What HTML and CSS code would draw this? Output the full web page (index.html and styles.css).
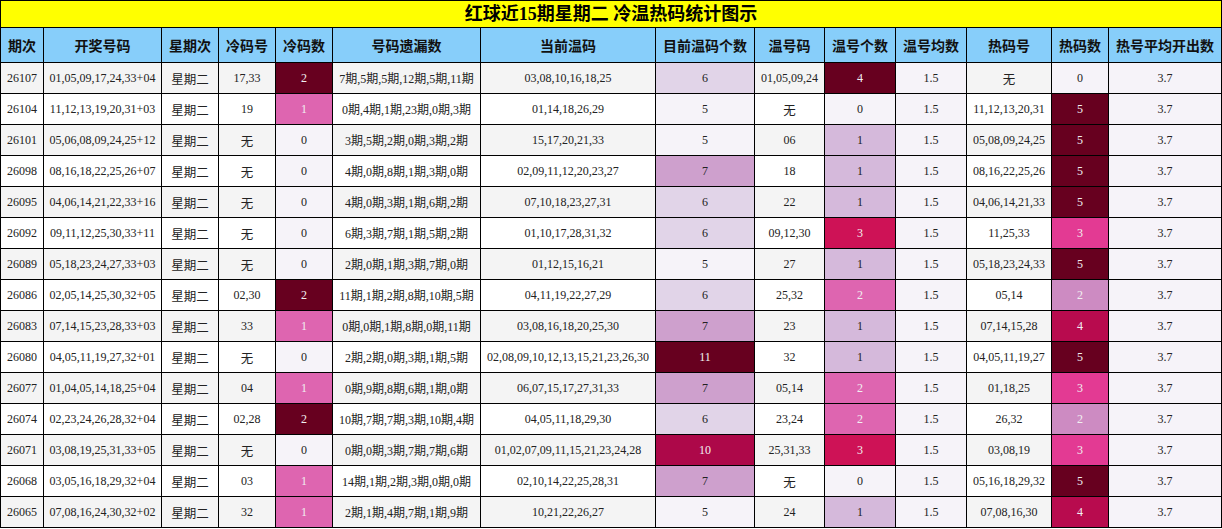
FILE: index.html
```html
<!DOCTYPE html>
<html lang="zh">
<head>
<meta charset="utf-8">
<title>红球近15期星期二 冷温热码统计图示</title>
<link rel="stylesheet" href="styles.css">
</head>
<body>
<table class="stats">
<colgroup>
<col class="w43"><col class="w118"><col class="w57"><col class="w57"><col class="w57"><col class="w148"><col class="w175"><col class="w99"><col class="w70"><col class="w71"><col class="w71"><col class="w85"><col class="w57"><col class="w113">
</colgroup>
<thead>
<tr class="title-row"><th colspan="14">红球近15期星期二 冷温热码统计图示</th></tr>
<tr class="head-row">
<th>期次</th><th>开奖号码</th><th>星期次</th><th>冷码号</th><th>冷码数</th><th>号码遗漏数</th><th>当前温码</th><th>目前温码个数</th><th>温号码</th><th>温号个数</th><th>温号均数</th><th>热码号</th><th>热码数</th><th>热号平均开出数</th>
</tr>
</thead>
<tbody>
<tr><td>26107</td><td>01,05,09,17,24,33+04</td><td class="cjk">星期二</td><td>17,33</td><td class="q100 lt">2</td><td>7期,5期,5期,12期,5期,11期</td><td>03,08,10,16,18,25</td><td class="q17">6</td><td>01,05,09,24</td><td class="q100 lt">4</td><td class="q0">1.5</td><td class="cjk">无</td><td class="q0">0</td><td class="q0">3.7</td></tr>
<tr><td>26104</td><td>11,12,13,19,20,31+03</td><td class="cjk">星期二</td><td>19</td><td class="q50 lt">1</td><td>0期,4期,1期,23期,0期,3期</td><td>01,14,18,26,29</td><td class="q0">5</td><td class="cjk">无</td><td class="q0">0</td><td class="q0">1.5</td><td>11,12,13,20,31</td><td class="q100 lt">5</td><td class="q0">3.7</td></tr>
<tr><td>26101</td><td>05,06,08,09,24,25+12</td><td class="cjk">星期二</td><td class="cjk">无</td><td class="q0">0</td><td>3期,5期,2期,0期,3期,2期</td><td>15,17,20,21,33</td><td class="q0">5</td><td>06</td><td class="q25">1</td><td class="q0">1.5</td><td>05,08,09,24,25</td><td class="q100 lt">5</td><td class="q0">3.7</td></tr>
<tr><td>26098</td><td>08,16,18,22,25,26+07</td><td class="cjk">星期二</td><td class="cjk">无</td><td class="q0">0</td><td>4期,0期,8期,1期,3期,0期</td><td>02,09,11,12,20,23,27</td><td class="q33">7</td><td>18</td><td class="q25">1</td><td class="q0">1.5</td><td>08,16,22,25,26</td><td class="q100 lt">5</td><td class="q0">3.7</td></tr>
<tr><td>26095</td><td>04,06,14,21,22,33+16</td><td class="cjk">星期二</td><td class="cjk">无</td><td class="q0">0</td><td>4期,0期,3期,1期,6期,2期</td><td>07,10,18,23,27,31</td><td class="q17">6</td><td>22</td><td class="q25">1</td><td class="q0">1.5</td><td>04,06,14,21,33</td><td class="q100 lt">5</td><td class="q0">3.7</td></tr>
<tr><td>26092</td><td>09,11,12,25,30,33+11</td><td class="cjk">星期二</td><td class="cjk">无</td><td class="q0">0</td><td>6期,3期,7期,1期,5期,2期</td><td>01,10,17,28,31,32</td><td class="q17">6</td><td>09,12,30</td><td class="q75 lt">3</td><td class="q0">1.5</td><td>11,25,33</td><td class="q60 lt">3</td><td class="q0">3.7</td></tr>
<tr><td>26089</td><td>05,18,23,24,27,33+03</td><td class="cjk">星期二</td><td class="cjk">无</td><td class="q0">0</td><td>2期,0期,1期,3期,7期,0期</td><td>01,12,15,16,21</td><td class="q0">5</td><td>27</td><td class="q25">1</td><td class="q0">1.5</td><td>05,18,23,24,33</td><td class="q100 lt">5</td><td class="q0">3.7</td></tr>
<tr><td>26086</td><td>02,05,14,25,30,32+05</td><td class="cjk">星期二</td><td>02,30</td><td class="q100 lt">2</td><td>11期,1期,2期,8期,10期,5期</td><td>04,11,19,22,27,29</td><td class="q17">6</td><td>25,32</td><td class="q50 lt">2</td><td class="q0">1.5</td><td>05,14</td><td class="q40 lt">2</td><td class="q0">3.7</td></tr>
<tr><td>26083</td><td>07,14,15,23,28,33+03</td><td class="cjk">星期二</td><td>33</td><td class="q50 lt">1</td><td>0期,0期,1期,8期,0期,11期</td><td>03,08,16,18,20,25,30</td><td class="q33">7</td><td>23</td><td class="q25">1</td><td class="q0">1.5</td><td>07,14,15,28</td><td class="q80 lt">4</td><td class="q0">3.7</td></tr>
<tr><td>26080</td><td>04,05,11,19,27,32+01</td><td class="cjk">星期二</td><td class="cjk">无</td><td class="q0">0</td><td>2期,2期,0期,3期,1期,5期</td><td>02,08,09,10,12,13,15,21,23,26,30</td><td class="q100 lt">11</td><td>32</td><td class="q25">1</td><td class="q0">1.5</td><td>04,05,11,19,27</td><td class="q100 lt">5</td><td class="q0">3.7</td></tr>
<tr><td>26077</td><td>01,04,05,14,18,25+04</td><td class="cjk">星期二</td><td>04</td><td class="q50 lt">1</td><td>0期,9期,8期,6期,1期,0期</td><td>06,07,15,17,27,31,33</td><td class="q33">7</td><td>05,14</td><td class="q50 lt">2</td><td class="q0">1.5</td><td>01,18,25</td><td class="q60 lt">3</td><td class="q0">3.7</td></tr>
<tr><td>26074</td><td>02,23,24,26,28,32+04</td><td class="cjk">星期二</td><td>02,28</td><td class="q100 lt">2</td><td>10期,7期,7期,3期,10期,4期</td><td>04,05,11,18,29,30</td><td class="q17">6</td><td>23,24</td><td class="q50 lt">2</td><td class="q0">1.5</td><td>26,32</td><td class="q40 lt">2</td><td class="q0">3.7</td></tr>
<tr><td>26071</td><td>03,08,19,25,31,33+05</td><td class="cjk">星期二</td><td class="cjk">无</td><td class="q0">0</td><td>0期,0期,3期,7期,7期,6期</td><td>01,02,07,09,11,15,21,23,24,28</td><td class="q83 lt">10</td><td>25,31,33</td><td class="q75 lt">3</td><td class="q0">1.5</td><td>03,08,19</td><td class="q60 lt">3</td><td class="q0">3.7</td></tr>
<tr><td>26068</td><td>03,05,16,18,29,32+04</td><td class="cjk">星期二</td><td>03</td><td class="q50 lt">1</td><td>14期,1期,2期,3期,0期,0期</td><td>02,10,14,22,25,28,31</td><td class="q33">7</td><td class="cjk">无</td><td class="q0">0</td><td class="q0">1.5</td><td>05,16,18,29,32</td><td class="q100 lt">5</td><td class="q0">3.7</td></tr>
<tr><td>26065</td><td>07,08,16,24,30,32+02</td><td class="cjk">星期二</td><td>32</td><td class="q50 lt">1</td><td>2期,1期,4期,7期,1期,9期</td><td>10,21,22,26,27</td><td class="q0">5</td><td>24</td><td class="q25">1</td><td class="q0">1.5</td><td>07,08,16,30</td><td class="q80 lt">4</td><td class="q0">3.7</td></tr>
</tbody>
</table>
</body>
</html>
```
FILE: styles.css
```css
html, body {
  margin: 0;
  padding: 0;
  background: #ffffff;
}

.stats {
  border-collapse: collapse;
  table-layout: fixed;
  width: 1222px;
  font-family: "Liberation Serif", "Noto Sans CJK SC", serif;
  font-size: 12px;
  color: #222222;
}

.w43 { width: 43px; }
.w57 { width: 57px; }
.w70 { width: 70px; }
.w71 { width: 71px; }
.w85 { width: 85px; }
.w99 { width: 99px; }
.w113 { width: 113px; }
.w118 { width: 118px; }
.w148 { width: 148px; }
.w175 { width: 175px; }

.stats th,
.stats td {
  border: 1px solid #000000;
  padding: 0;
  text-align: center;
  vertical-align: middle;
  white-space: nowrap;
  overflow: hidden;
}

.title-row th {
  height: 26px;
  background: #ffff00;
  color: #000000;
  font-size: 18px;
  font-weight: bold;
  line-height: 26px;
}

.head-row th {
  height: 34px;
  background: #87cefa;
  color: #111111;
  font-size: 14px;
  font-weight: bold;
  font-family: "Noto Sans CJK SC", sans-serif;
}

.stats tbody tr {
  height: 31px;
}

.stats tbody td {
  height: 30px;
}

.stats tbody tr:nth-child(odd) td {
  background: #f4f4f4;
}

.stats tbody tr:nth-child(even) td {
  background: #ffffff;
}

.stats td.cjk {
  font-size: 12.5px;
}

/* PuRd colour scale (placed after the row striping so it wins) */
.stats tbody tr td.q0 { background: #f6f3f9; }
.stats tbody tr td.q17 { background: #e1d4e8; }
.stats tbody tr td.q25 { background: #d5b9db; }
.stats tbody tr td.q33 { background: #cea0cd; }
.stats tbody tr td.q40 { background: #cd8bc2; }
.stats tbody tr td.q50 { background: #de65b0; }
.stats tbody tr td.q60 { background: #e33a93; }
.stats tbody tr td.q75 { background: #ce1256; }
.stats tbody tr td.q80 { background: #b80b4e; }
.stats tbody tr td.q83 { background: #ad0849; }
.stats tbody tr td.q100 { background: #67001f; }

.stats td.lt {
  color: #f1f1f1;
}
```
